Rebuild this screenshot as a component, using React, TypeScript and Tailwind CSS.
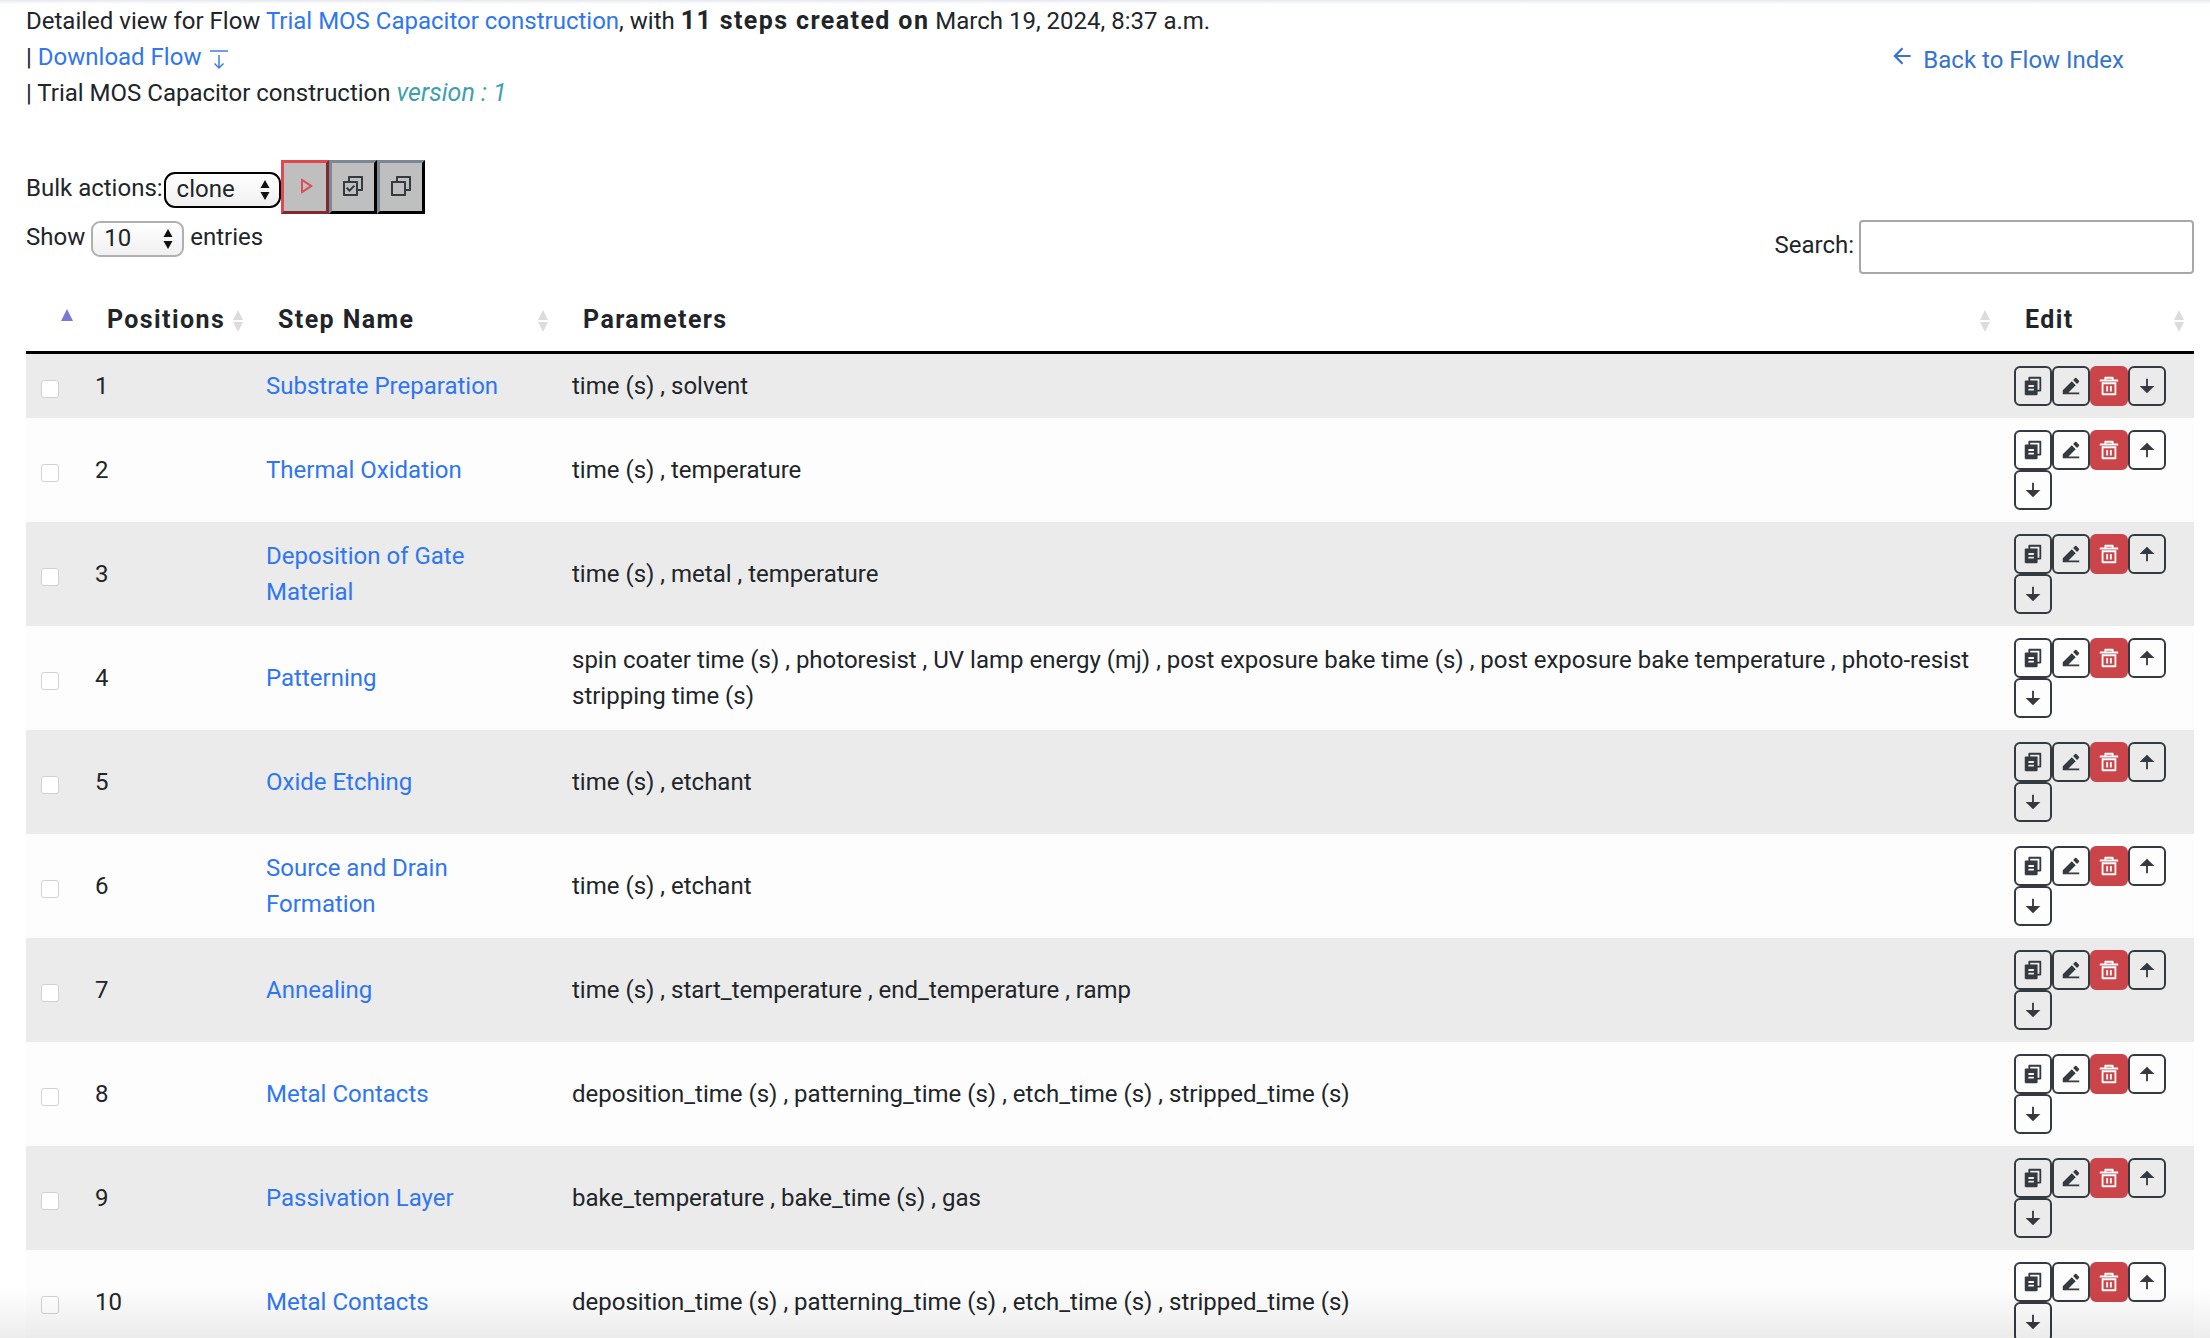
import React from "react";
import { RiFileCopy2Fill, RiEdit2Fill, RiDeleteBin5Line, RiArrowDownFill, RiArrowUpFill, RiPlayLine, RiCheckboxMultipleLine, RiCheckboxMultipleBlankLine, RiArrowLeftLine } from "react-icons/ri";

const rows: [number, string, string][] = [
  [1, "Substrate Preparation", "time (s) , solvent"],
  [2, "Thermal Oxidation", "time (s) , temperature"],
  [3, "Deposition of Gate Material", "time (s) , metal , temperature"],
  [4, "Patterning", "spin coater time (s) , photoresist , UV lamp energy (mj) , post exposure bake time (s) , post exposure bake temperature , photo-resist stripping time (s)"],
  [5, "Oxide Etching", "time (s) , etchant"],
  [6, "Source and Drain Formation", "time (s) , etchant"],
  [7, "Annealing", "time (s) , start_temperature , end_temperature , ramp"],
  [8, "Metal Contacts", "deposition_time (s) , patterning_time (s) , etch_time (s) , stripped_time (s)"],
  [9, "Passivation Layer", "bake_temperature , bake_time (s) , gas"],
  [10, "Metal Contacts", "deposition_time (s) , patterning_time (s) , etch_time (s) , stripped_time (s)"],
];

function Sort({ active }: { active?: boolean }) {
  return (
    <svg width="12" height="24" viewBox="0 0 12 24" className="absolute right-[9px] top-[20px]">
      {active ? (
        <path d="M6 0 L12 12 L0 12 Z" fill="#7a7ad6" />
      ) : (
        <>
          <path d="M6 1 L11 11 L1 11 Z" fill="#dcdcdc" />
          <path d="M6 23 L11 13 L1 13 Z" fill="#dcdcdc" />
        </>
      )}
    </svg>
  );
}

function Btn({ children, danger }: { children: React.ReactNode; danger?: boolean }) {
  return (
    <button
      className={
        danger
          ? "w-[38px] h-10 flex items-center justify-center rounded-[6px] border-2 border-[#cb444a] bg-[#cb444a] text-white text-[22px]"
          : "w-[38px] h-10 flex items-center justify-center rounded-[6px] border-2 border-[#343a40] text-[#343a40] text-[22px]"
      }
    >
      {children}
    </button>
  );
}

function Arrows() {
  return (
    <svg width="10" height="22" viewBox="0 0 10 22" className="absolute right-[11px] top-1/2 -translate-y-1/2 pointer-events-none">
      <path d="M5 1 L9.5 9 L0.5 9 Z M5 21 L9.5 13 L0.5 13 Z" fill="#111" />
    </svg>
  );
}

function Bulk({ children, danger }: { children: React.ReactNode; danger?: boolean }) {
  return (
    <button
      className={
        danger
          ? "w-[48px] h-[54px] pb-[3px] flex items-center justify-center bg-[#bfbfbf] border-[3px] border-t-[#e2474f] border-l-[#e2474f] border-r-[#7f2a30] border-b-[#7f2a30] text-[#d9505a] text-[24px]"
          : "w-[48px] h-[54px] pb-[3px] flex items-center justify-center bg-[#bfbfbf] border-[3px] border-t-[#7b8791] border-l-[#7b8791] border-r-black border-b-black text-[#343a40] text-[24px]"
      }
    >
      {children}
    </button>
  );
}

export default function App() {
  return (
    <div className="relative h-[1338px] w-[2210px] overflow-hidden bg-white pl-[26px] pr-[16px] text-[24px] leading-[36px] text-[#212529] font-['Roboto',sans-serif]">
      <div className="absolute inset-x-0 top-0 h-[4px] bg-gradient-to-b from-[#e6e8f0] to-white" />
      <div className="absolute inset-x-0 bottom-0 z-10 h-[50px] bg-gradient-to-b from-transparent to-[#00000012] pointer-events-none" />

      <div className="flex justify-between pt-[3px]">
        <div className="h-[108px]">
          <div>
            Detailed view for Flow <a className="text-[#2f76f2]">Trial MOS Capacitor construction</a>, with <b className="text-[25px] font-bold tracking-[1.4px]">11 steps created on</b> March 19, 2024, 8:37 a.m.
          </div>
          <div className="flex items-center gap-[8px]">
            <span>| <a className="text-[#2f76f2]">Download Flow</a></span>
            <svg width="20" height="22" viewBox="0 0 20 22" fill="none" stroke="#3f7de0" strokeWidth="1.5" className="mt-[4px]">
              <path d="M1 3 H19 M10 7 V20 M5.5 15.5 L10 20 L14.5 15.5" />
            </svg>
          </div>
          <div>
            | Trial MOS Capacitor construction <i className="text-[25px] text-[#3f9fae]">version : 1</i>
          </div>
        </div>
        <div className="flex gap-[8px] pr-[70px] pt-[39px] text-[#3573cf] h-[76px]">
          <RiArrowLeftLine className="text-[26px] mt-[1px]" />
          <a>Back to Flow Index</a>
        </div>
      </div>

      <div className="mt-[49px] flex items-start h-[54px]">
        <span className="mt-[10px] mr-[1px]">Bulk actions:</span>
        <div className="relative mt-[12px]">
          <select className="block w-[117px] h-[36px] appearance-none rounded-[11px] border-2 border-black bg-gradient-to-b from-white to-[#f0f0f0] pl-[11px] pb-[3px] leading-none outline-none">
            <option>clone</option>
          </select>
          <Arrows />
        </div>
        <Bulk danger><RiPlayLine /></Bulk>
        <Bulk><RiCheckboxMultipleLine /></Bulk>
        <Bulk><RiCheckboxMultipleBlankLine /></Bulk>
      </div>

      <div className="flex justify-between h-[71px] mt-[4px]">
        <div className="flex items-start">
          <span className="mt-[1px]">Show</span>
          <div className="relative mx-[6px] mt-[3px]">
            <select className="block w-[93px] h-[36px] appearance-none rounded-[9px] border-2 border-[#b0b0b0] bg-gradient-to-b from-white to-[#f0f0f0] pl-[11px] pb-[3px] leading-none outline-none">
              <option>10</option>
            </select>
            <Arrows />
          </div>
          <span className="mt-[1px]">entries</span>
        </div>
        <div className="flex items-start">
          <span className="mt-[9px] mr-[5px]">Search:</span>
          <input className="w-[335px] h-[54px] mt-[2px] rounded-[4px] border-2 border-[#a8a8a8] outline-none" />
        </div>
      </div>

      <table className="w-[2168px] table-fixed border-separate border-spacing-0">
        <colgroup>
          <col className="w-[56px]" />
          <col className="w-[171px]" />
          <col className="w-[305px]" />
          <col className="w-[1442px]" />
          <col className="w-[194px]" />
        </colgroup>
        <thead>
          <tr className="h-[65px] text-left">
            {["", "Positions", "Step Name", "Parameters", "Edit"].map((t, i) => (
              <th key={i} className="relative border-b-[3px] border-black pl-[25px] text-[25px] font-bold tracking-[1.4px]">
                {t}
                <Sort active={i === 0} />
              </th>
            ))}
          </tr>
        </thead>
        <tbody>
          {rows.map(([n, name, params], i) => (
            <tr key={n} className={i % 2 === 0 ? "bg-[#ebebeb]" : "bg-[#fdfdfd]"}>
              <td className="pl-[15px] align-middle">
                <input type="checkbox" className="block mt-[6px] h-[18px] w-[18px] appearance-none rounded-[3px] border border-[#d2d2d2] bg-white" />
              </td>
              <td className="px-[13px] align-middle">{n}</td>
              <td className="px-[13px] align-middle text-[#2f76f2]">{name}</td>
              <td className="px-[14px] py-[14px] align-middle">{params}</td>
              <td className="px-[14px] py-[12px] align-middle">
                <div className="flex flex-wrap">
                  <Btn><RiFileCopy2Fill /></Btn>
                  <Btn><RiEdit2Fill /></Btn>
                  <Btn danger><RiDeleteBin5Line /></Btn>
                  {i > 0 && <Btn><RiArrowUpFill /></Btn>}
                  <Btn><RiArrowDownFill /></Btn>
                </div>
              </td>
            </tr>
          ))}
        </tbody>
      </table>
    </div>
  );
}
